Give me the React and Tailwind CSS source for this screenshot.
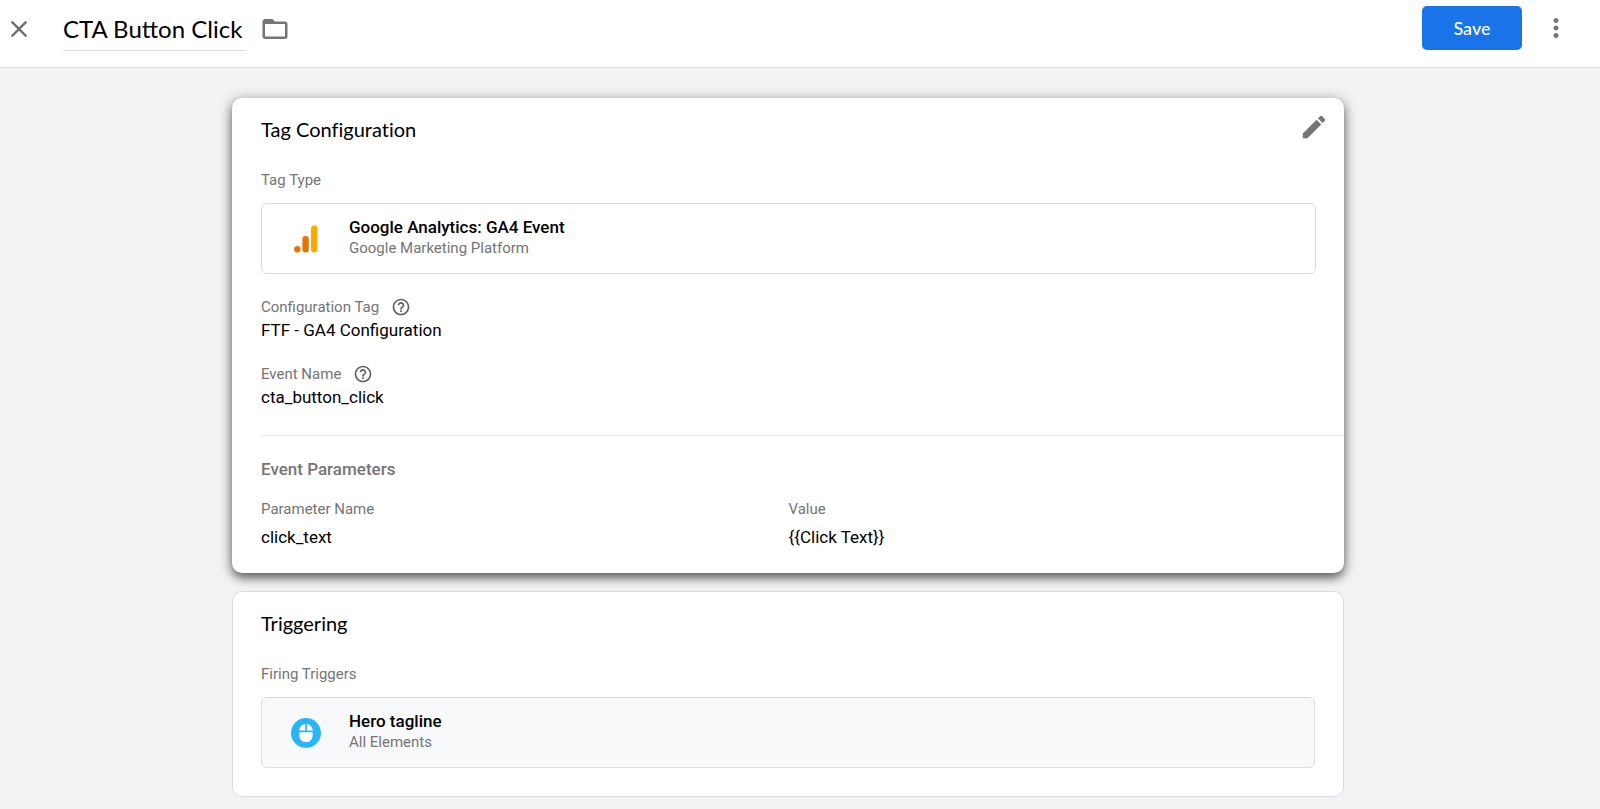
// src/App.jsx
import React, { useState } from 'react';
import { MdClose, MdEdit, MdFolderOpen, MdHelpOutline, MdMoreVert, MdMouse } from 'react-icons/md';

const parameters = [{ name: 'click_text', value: '{{Click Text}}' }];

const AnalyticsIcon = () => (
  <svg viewBox="0 0 24 28" className="w-6 h-7" aria-hidden="true">
    <rect x="17" y="0.5" width="6.4" height="27" rx="3.2" fill="#f9ab00" />
    <rect x="8.4" y="11" width="6.4" height="16.5" rx="3.2" fill="#e37400" />
    <circle cx="3.3" cy="24.3" r="3.2" fill="#e37400" />
  </svg>
);

const MouseIcon = () => (
  <span className="flex items-center justify-center w-[30px] h-[30px] rounded-full bg-[#29b6f6] text-white">
    <MdMouse size={20} />
  </span>
);

const Field = ({ label, value }) => (
  <div>
    <dt className="flex items-center gap-3 text-[15px] leading-[22px] text-[#757575]">
      {label}
      <button type="button" aria-label={`Help: ${label}`} className="text-[#5f6368]">
        <MdHelpOutline size={20} />
      </button>
    </dt>
    <dd className="text-[17px] leading-6">{value}</dd>
  </div>
);

const TypeBox = ({ icon, title, subtitle, className }) => (
  <button
    type="button"
    className={`flex w-full items-center rounded-md border border-[#dadce0] py-3 text-left ${className}`}
  >
    <span className="flex w-[87px] justify-center">{icon}</span>
    <span className="flex flex-col pb-[3px]">
      <span className="text-[17px] font-medium leading-[22px]">{title}</span>
      <span className="text-[15px] leading-5 text-[#757575]">{subtitle}</span>
    </span>
  </button>
);

function Header() {
  const [name, setName] = useState('CTA Button Click');

  return (
    <header className="flex items-start border-b border-[#dadce0] bg-white pb-4 pl-[5px] pr-[29px] pt-[6px]">
      <button type="button" aria-label="Close" className="mt-[9px] text-[#6e6e6e]">
        <MdClose size={28} />
      </button>
      <input
        type="text"
        aria-label="Tag name"
        value={name}
        onChange={(e) => setName(e.target.value)}
        className="ml-[30px] h-[45px] w-[183px] border-b border-[#dadce0] font-[Lato,sans-serif] text-2xl outline-none"
      />
      <button type="button" aria-label="Move to folder" className="ml-[14px] mt-2 text-[#757575]">
        <MdFolderOpen size={30} />
      </button>
      <button
        type="button"
        className="ml-auto h-11 w-[100px] rounded-[5px] bg-[#1a73e8] font-[Lato,sans-serif] text-lg font-medium text-white"
      >
        Save
      </button>
      <button type="button" aria-label="More actions" className="ml-[19px] mt-[7px] text-[#757575]">
        <MdMoreVert size={30} />
      </button>
    </header>
  );
}

function TagConfiguration() {
  return (
    <section className="rounded-[10px] bg-white pb-6 pl-[29px] pt-[17px] shadow-[0_5px_10px_rgba(0,0,0,0.5),0_2px_16px_rgba(0,0,0,0.25)]">
      <div className="flex h-7 items-center justify-between pr-[15px]">
        <h2 className="font-[Lato,sans-serif] text-xl [font-variant-ligatures:none]">
          Tag Configuration
        </h2>
        <button type="button" aria-label="Edit" className="-mt-1 text-[#757575]">
          <MdEdit size={30} />
        </button>
      </div>

      <div className="pr-7">
        <h3 className="mb-[13px] mt-[27px] text-[15px] leading-5 text-[#757575]">Tag Type</h3>
        <TypeBox
          icon={<AnalyticsIcon />}
          title="Google Analytics: GA4 Event"
          subtitle="Google Marketing Platform"
          className="bg-white"
        />
        <dl className="mb-[26px] mt-[22px] space-y-[21px]">
          <Field label="Configuration Tag" value="FTF - GA4 Configuration" />
          <Field label="Event Name" value="cta_button_click" />
        </dl>
      </div>

      <div className="border-t border-[#e8eaed] pr-7 pt-[21px]">
        <h3 className="text-[17px] font-medium leading-6 text-[#757575]">Event Parameters</h3>
        <table className="mt-[17px] w-full table-fixed text-left">
          <thead>
            <tr className="text-[15px] leading-[22px] text-[#757575]">
              <th className="pb-[5px] font-normal">Parameter Name</th>
              <th className="pb-[5px] font-normal">Value</th>
            </tr>
          </thead>
          <tbody>
            {parameters.map((param) => (
              <tr key={param.name} className="text-[17px] leading-6">
                <td>{param.name}</td>
                <td>{param.value}</td>
              </tr>
            ))}
          </tbody>
        </table>
      </div>
    </section>
  );
}

function Triggering() {
  return (
    <section className="rounded-[10px] border border-[#dadce0] bg-white px-7 pb-7 pt-[17px]">
      <h2 className="font-[Lato,sans-serif] text-xl leading-7 [font-variant-ligatures:none]">
        Triggering
      </h2>
      <h3 className="mb-[13px] mt-[27px] text-[15px] leading-5 text-[#757575]">Firing Triggers</h3>
      <TypeBox
        icon={<MouseIcon />}
        title="Hero tagline"
        subtitle="All Elements"
        className="bg-[#f8f9fb]"
      />
    </section>
  );
}

function App() {
  return (
    <div className="min-h-screen bg-[#f1f3f4] font-[Roboto,sans-serif] text-black">
      <Header />
      <main className="pb-3 pl-6 pr-12 pt-[30px]">
        <div className="mx-auto flex max-w-[1112px] flex-col gap-[18px]">
          <TagConfiguration />
          <Triggering />
        </div>
      </main>
    </div>
  );
}

export default App;
